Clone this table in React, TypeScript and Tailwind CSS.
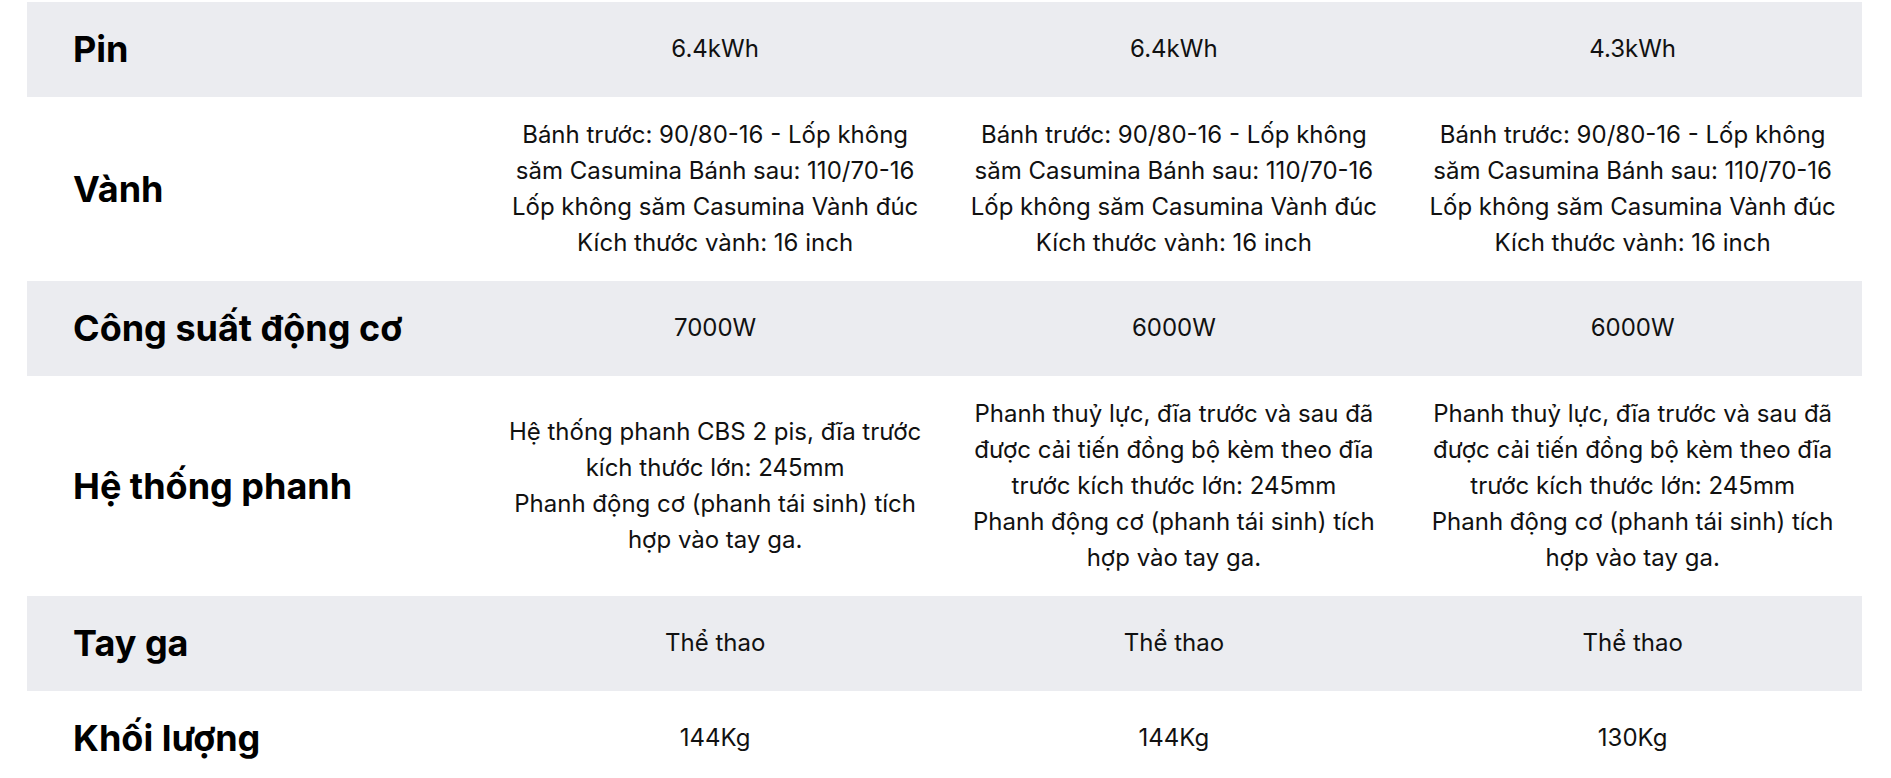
const rows: { label: string; values: string[][] }[] = [
  { label: "Pin", values: [["6.4kWh"], ["6.4kWh"], ["4.3kWh"]] },
  {
    label: "Vành",
    values: [
      ["Bánh trước: 90/80-16 - Lốp không săm Casumina Bánh sau: 110/70-16 Lốp không săm Casumina Vành đúc Kích thước vành: 16 inch"],
      ["Bánh trước: 90/80-16 - Lốp không săm Casumina Bánh sau: 110/70-16 Lốp không săm Casumina Vành đúc Kích thước vành: 16 inch"],
      ["Bánh trước: 90/80-16 - Lốp không săm Casumina Bánh sau: 110/70-16 Lốp không săm Casumina Vành đúc Kích thước vành: 16 inch"],
    ],
  },
  { label: "Công suất động cơ", values: [["7000W"], ["6000W"], ["6000W"]] },
  {
    label: "Hệ thống phanh",
    values: [
      ["Hệ thống phanh CBS 2 pis, đĩa trước kích thước lớn: 245mm", "Phanh động cơ (phanh tái sinh) tích hợp vào tay ga."],
      ["Phanh thuỷ lực, đĩa trước và sau đã được cải tiến đồng bộ kèm theo đĩa trước kích thước lớn: 245mm", "Phanh động cơ (phanh tái sinh) tích hợp vào tay ga."],
      ["Phanh thuỷ lực, đĩa trước và sau đã được cải tiến đồng bộ kèm theo đĩa trước kích thước lớn: 245mm", "Phanh động cơ (phanh tái sinh) tích hợp vào tay ga."],
    ],
  },
  { label: "Tay ga", values: [["Thể thao"], ["Thể thao"], ["Thể thao"]] },
  { label: "Khối lượng", values: [["144Kg"], ["144Kg"], ["130Kg"]] },
];

export default function App() {
  return (
    <div
      className="min-h-screen bg-white pl-[27px] pr-[29px] pt-[2px] text-black"
      style={{ fontFamily: "Inter, 'Noto Sans', sans-serif" }}
    >
      <div className="flex flex-col">
        {rows.map((row, i) => (
          <div
            key={row.label}
            className={`grid grid-cols-4 items-center ${i % 2 === 0 ? "bg-[#ebecf0]" : "bg-white"}`}
          >
            <div className="py-[20.25px] pl-[46px] pr-5 text-[36px] font-bold leading-[54px]">
              {row.label}
            </div>
            {row.values.map((lines, j) => (
              <div key={j} className="px-5 py-[20.25px] text-center text-[24px] leading-[36px] text-[#111]">
                {lines.map((l, k) => (
                  <p key={k}>{l}</p>
                ))}
              </div>
            ))}
          </div>
        ))}
      </div>
    </div>
  );
}
